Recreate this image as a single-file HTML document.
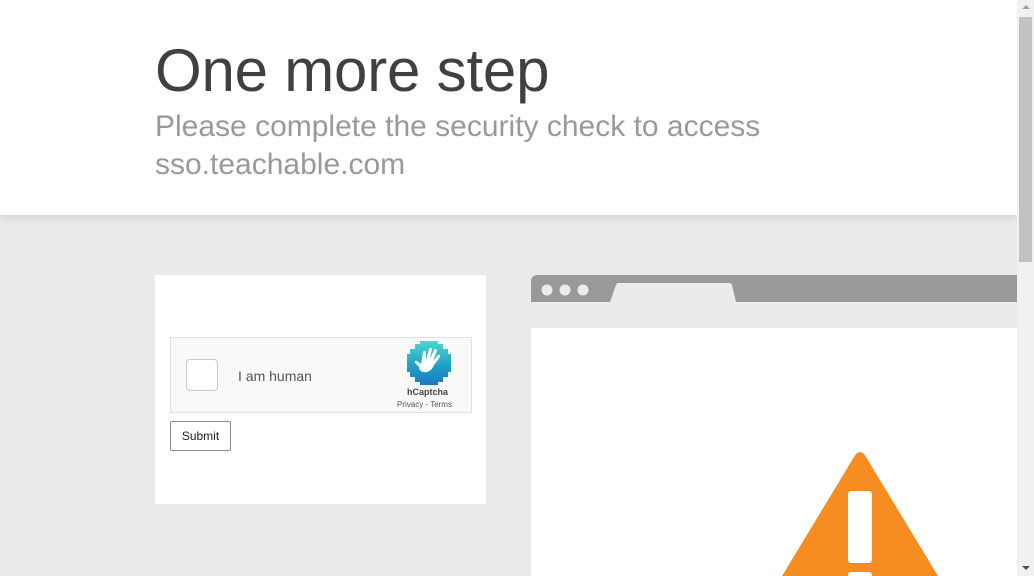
<!DOCTYPE html>
<html><head><style>
*{margin:0;padding:0;box-sizing:border-box}
body{width:1034px;height:576px;overflow:hidden;background:#eaeaea;font-family:"Liberation Sans",Arial,sans-serif;position:relative}
.hdr{position:absolute;left:0;top:0;width:1017px;height:215px;background:#fff;box-shadow:0 2px 8px rgba(0,0,0,.12)}
h1{position:absolute;left:155px;top:36px;font-size:60px;font-weight:400;color:#404040;letter-spacing:-.2px}
h2{position:absolute;left:155px;top:108px;font-size:30px;font-weight:400;color:#999;line-height:38px;width:700px}
.card{position:absolute;left:155px;top:275px;width:331px;height:229px;background:#fff}
.cap{position:absolute;left:15px;top:62px;width:302px;height:76px;background:#f9f9f9;border:1px solid #e0e0e0}
.cb{position:absolute;left:15px;top:21px;width:32px;height:32px;background:#fff;border:1px solid #c8c8c8;border-radius:4px}
.lbl{position:absolute;left:67px;top:30px;font-size:14px;color:#555}
.brand{position:absolute;left:236px;top:49px;font-size:9px;font-weight:bold;color:#444}
.links{position:absolute;left:226px;top:62px;font-size:8px;color:#555}
.btn{position:absolute;left:15px;top:146px;width:61px;height:30px;border:1px solid #8a8a8a;border-radius:2px;background:#fff;font-size:12px;color:#222;text-align:center;line-height:28px}
.sb{position:absolute;left:1017px;top:0;width:17px;height:576px;background:#f1f1f1}
.th{position:absolute;left:2px;top:17px;width:13px;height:245px;background:#c1c1c1}
</style></head><body>
<div class="hdr"></div>
<h1>One more step</h1>
<h2>Please complete the security check to access sso.teachable.com</h2>
<div class="card">
 <div class="cap">
  <div class="cb"></div>
  <div class="lbl">I am human</div>
  <svg style="position:absolute;left:236px;top:3px" width="44" height="44" viewBox="0 0 44 44">
   <defs><linearGradient id="g" x1="0" y1="0" x2="0" y2="1"><stop offset="0" stop-color="#4fd6d0"/><stop offset=".5" stop-color="#22a6c4"/><stop offset="1" stop-color="#1c78c0"/></linearGradient></defs>
   <path d="M13 0h18v3h5v5h5v5h3v18h-3v5h-5v5h-5v3H13v-3H8v-5H3v-5H0V13h3V8h5V3h5z" fill="url(#g)"/>
   <path d="M12 26 l-4 -4 c-1-2 1-3 2-2 l4 3 l2-12 c1-2 3-1 3 0 l0 8 l3-11 c1-2 3-1 3 0 l-2 10 l4-9 c1-2 3-1 3 1 l-4 10 l5-6 c1-1 3 0 2 2 l-6 8 c-2 5 -6 8 -11 7 c-3 -1 -4 -3 -4 -5z" fill="#fff"/>
  </svg>
  <div class="brand">hCaptcha</div>
  <div class="links">Privacy - Terms</div>
 </div>
 <div class="btn">Submit</div>
</div>
<svg style="position:absolute;left:531px;top:275px" width="486" height="301">
 <path d="M0 6 a6 6 0 0 1 6-6 H486 V27 H0z" fill="#999"/>
 <circle cx="16" cy="15" r="5.5" fill="#ebebeb"/><circle cx="34" cy="15" r="5.5" fill="#ebebeb"/><circle cx="52" cy="15" r="5.5" fill="#ebebeb"/>
 <path d="M79 27 L85 10 a3 3 0 0 1 3-2 H198 a3 3 0 0 1 3 2 L205 27z" fill="#ebebeb"/>
 <rect x="0" y="27" width="486" height="26" fill="#ebebeb"/>
 <rect x="0" y="53" width="486" height="248" fill="#fff"/>
 <path d="M251 301 L323 182 Q329 172 335 182 L407 301z" fill="#f68d21"/>
 <rect x="317" y="216" width="24" height="72" rx="3" fill="#fff"/>
 <rect x="317" y="297" width="24" height="10" rx="3" fill="#fff"/>
</svg>
<div class="sb"><div class="th"></div>
<div style="position:absolute;left:5px;top:5px;border:4px solid transparent;border-bottom:4px solid #a3a3a3;border-top:0"></div>
<div style="position:absolute;left:5px;top:566px;border:4px solid transparent;border-top:4px solid #505050;border-bottom:0"></div>
</div>
</body></html>
